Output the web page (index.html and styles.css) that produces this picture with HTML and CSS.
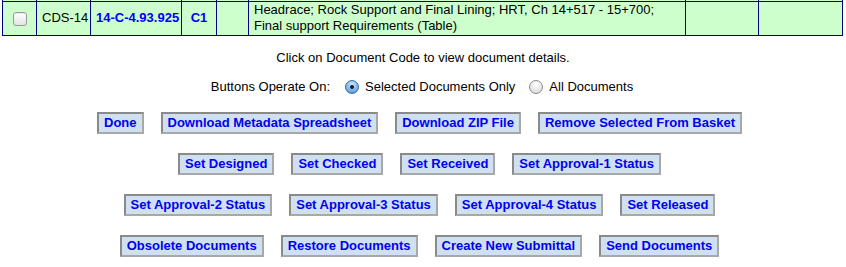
FILE: index.html
```html
<!DOCTYPE html>
<html>
<head>
<meta charset="utf-8">
<link rel="stylesheet" href="styles.css">
</head>
<body>
<table class="docs">
  <colgroup>
    <col class="c-chk"><col class="c-id"><col class="c-code"><col class="c-rev"><col class="c-e1"><col class="c-desc"><col class="c-e2"><col class="c-e3">
  </colgroup>
  <tr class="ghost"><td></td><td></td><td></td><td></td><td></td><td></td><td></td><td></td></tr>
  <tr>
    <td class="center"><span class="mac-check"></span></td>
    <td class="center">CDS-14</td>
    <td class="center"><a class="link" href="#">14-C-4.93.925</a></td>
    <td class="center"><a class="link" href="#">C1</a></td>
    <td></td>
    <td class="desc">Headrace; Rock Support and Final Lining; HRT, Ch 14+517 - 15+700;<br>Final support Requirements (Table)</td>
    <td></td>
    <td></td>
  </tr>
</table>

<p class="note">Click on Document Code to view document details.</p>

<div class="operate">
  <span class="label">Buttons Operate On:</span>
  <span class="radio on"></span><span class="opt">Selected Documents Only</span>
  <span class="radio"></span><span class="opt">All Documents</span>
</div>

<div class="btn-row">
  <button class="btn">Done</button>
  <button class="btn">Download Metadata Spreadsheet</button>
  <button class="btn">Download ZIP File</button>
  <button class="btn">Remove Selected From Basket</button>
</div>
<div class="btn-row">
  <button class="btn">Set Designed</button>
  <button class="btn">Set Checked</button>
  <button class="btn">Set Received</button>
  <button class="btn">Set Approval-1 Status</button>
</div>
<div class="btn-row">
  <button class="btn">Set Approval-2 Status</button>
  <button class="btn">Set Approval-3 Status</button>
  <button class="btn">Set Approval-4 Status</button>
  <button class="btn">Set Released</button>
</div>
<div class="btn-row">
  <button class="btn">Obsolete Documents</button>
  <button class="btn">Restore Documents</button>
  <button class="btn">Create New Submittal</button>
  <button class="btn">Send Documents</button>
</div>
</body>
</html>
```
FILE: styles.css
```css
html, body {
  margin: 0;
  padding: 0;
  background: #ffffff;
  font-family: "Liberation Sans", Arial, Helvetica, sans-serif;
  font-size: 13px;
  color: #000;
}

.docs {
  border-collapse: collapse;
  table-layout: fixed;
  width: 841px;
  margin: 0 0 0 2px;
  background: #ccffcc;
}
.docs td {
  border: 1px solid #000088;
  padding: 0 5px;
  line-height: 16px;
  vertical-align: middle;
  white-space: nowrap;
}
.ghost td { height: 0; padding: 0; line-height: 0; border-top: 0; }
.docs tr.ghost { height: 1px; }

.c-chk { width: 34px; }
.c-id { width: 54px; }
.c-code { width: 91px; }
.c-rev { width: 35px; }
.c-e1 { width: 32px; }
.c-desc { width: 437px; }
.c-e2 { width: 73px; }
.c-e3 { width: 84px; }

.center { text-align: center; }
.docs tr:not(.ghost) td { height: 33px; }
.desc { padding-left: 4px; }

.link {
  color: #0000ff;
  font-weight: bold;
  text-decoration: none;
}

.mac-check {
  display: inline-block;
  width: 12px;
  height: 12px;
  border: 1px solid #9a9a9a;
  border-radius: 3px;
  background: linear-gradient(#ffffff, #e4e4e4);
  box-shadow: inset 0 1px 1px rgba(0,0,0,0.08);
  vertical-align: middle;
}

.note {
  margin: 14px 0 0;
  text-align: center;
  line-height: 16px;
}

.operate {
  display: flex;
  justify-content: center;
  align-items: center;
  margin-top: 13px;
  line-height: 16px;
  padding-right: 2px;
}
.label { margin-right: 15px; }
.opt { margin-left: 6px; margin-right: 14px; }
.opt:last-child { margin-right: 0; }

.radio {
  display: inline-block;
  width: 12px;
  height: 12px;
  border-radius: 50%;
  border: 1px solid #8c8c8c;
  background: radial-gradient(circle at 50% 30%, #ffffff, #dcdcdc 80%);
  position: relative;
}
.radio.on {
  border-color: #3a6ea8;
  background: radial-gradient(circle at 50% 30%, #cfe6fb, #6ea7e3 70%, #3f7fca);
}
.radio.on::after {
  content: "";
  position: absolute;
  left: 4px;
  top: 4px;
  width: 4px;
  height: 4px;
  border-radius: 50%;
  background: #1a1a2a;
}

.btn-row {
  display: flex;
  justify-content: center;
  gap: 17px;
  padding-right: 7px;
  margin-top: 19px;
}
.operate + .btn-row { margin-top: 17px; }

.btn {
  font-family: "Liberation Sans", Arial, Helvetica, sans-serif;
  font-size: 13px;
  font-weight: bold;
  color: #0000ee;
  background: #cfe0f1;
  border: 2px solid;
  border-color: #8a8a8a #a8a8a8 #a8a8a8 #8a8a8a;
  padding: 0 5px;
  height: 22px;
  line-height: 18px;
  margin: 0;
  border-radius: 0;
}
```
